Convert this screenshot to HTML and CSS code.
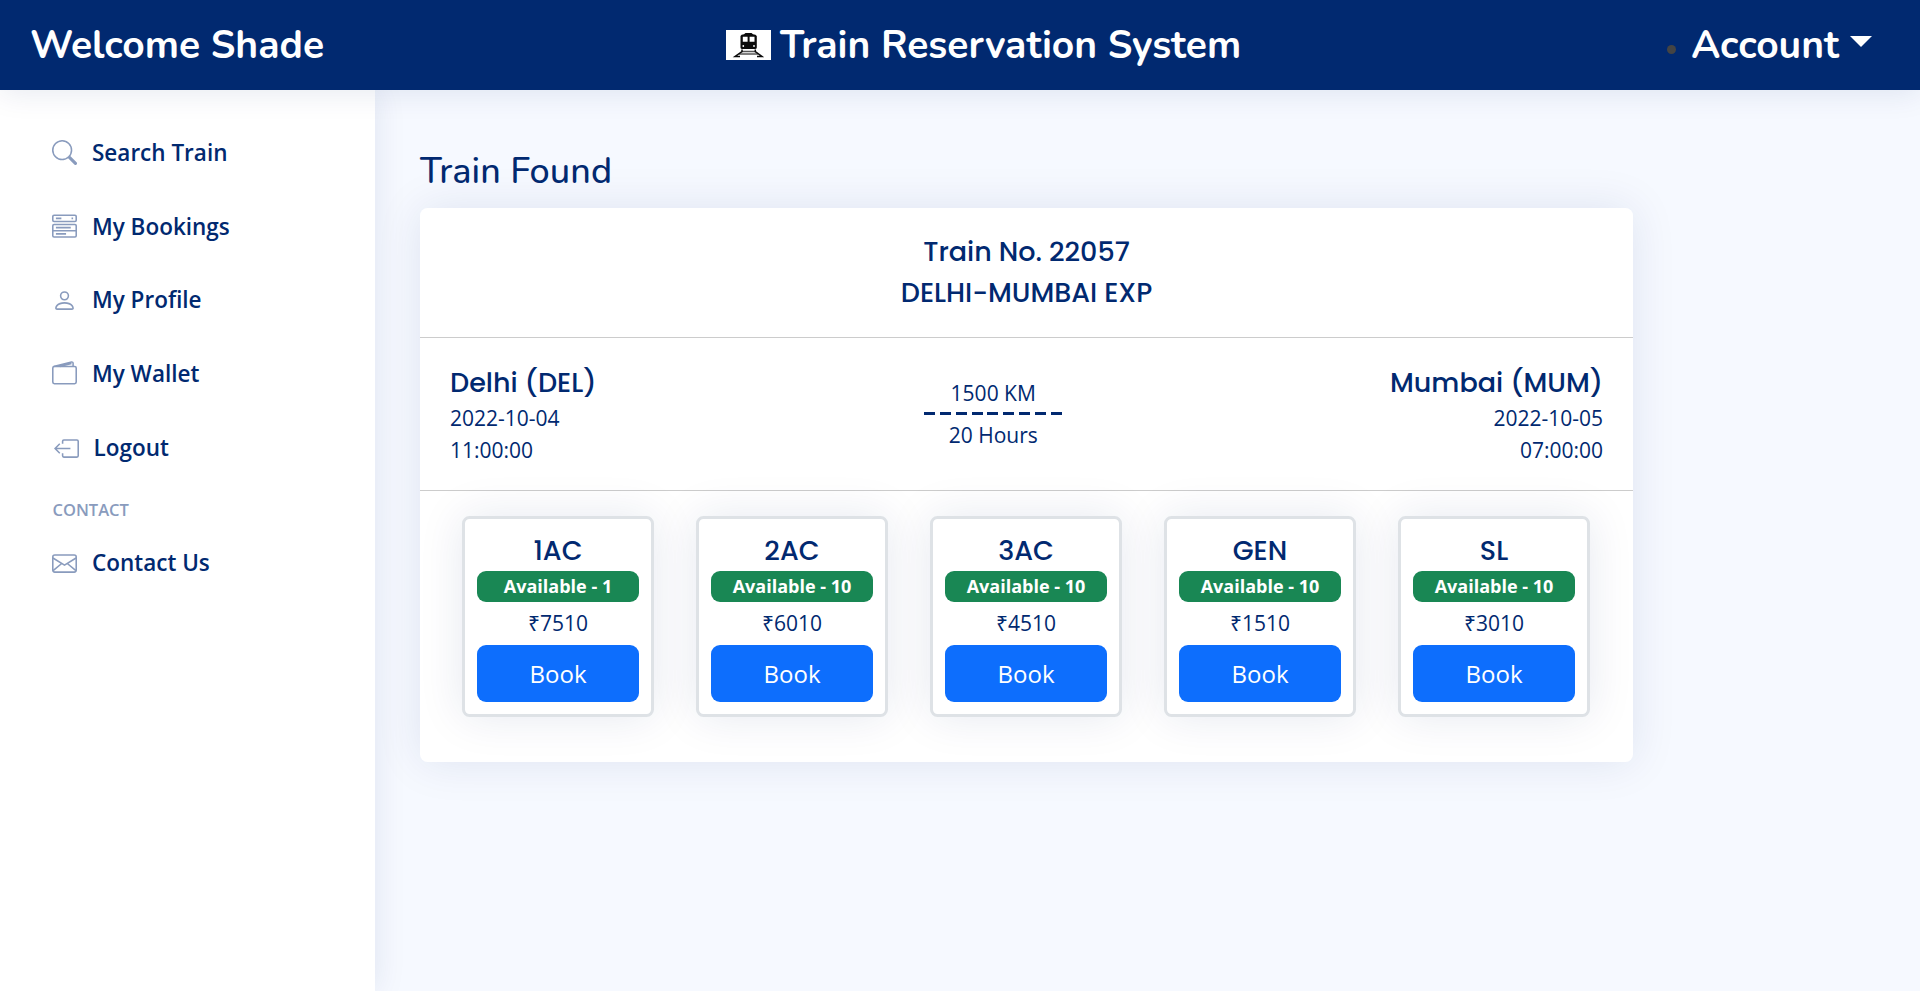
FILE: index.html
```html
<!DOCTYPE html>
<html lang="en">
<head>
<meta charset="utf-8">
<title>Train Reservation System</title>
<link rel="stylesheet" href="styles.css">
</head>
<body>
<header class="header">
  <h1 class="brand">Welcome Shade</h1>
  <h1 class="brand center"><svg class="logo" viewBox="0 0 45 30"><rect width="45" height="30" fill="#fff"/><path d="M14.500 6Q15 4.500 18 4.200L19.500 3H25.500L27 4.200Q30 4.500 30.800 6V17.500Q30.800 19 29 19H16.300Q14.500 19 14.500 17.500Z" fill="#0b0b0b"/><path d="M16.800 6.800H21.600V11.700H16.800ZM23.600 6.800H28.500V11.700H23.600Z" fill="#fff"/><circle cx="17.300" cy="16" r=".9" fill="#fff"/><circle cx="28" cy="16" r=".9" fill="#fff"/><path d="M16 21.500H29.500M13 24H32" stroke="#555" stroke-width="1.300"/><path d="M16 19.500V21.500L9 26.500H14M29.300 19.500V21.500L36 26.500H31" stroke="#0b0b0b" stroke-width="1.500" fill="none"/></svg><span>Train Reservation System</span></h1>
  <div class="account"><i class="bullet"></i><span class="brand">Account</span><i class="caret"></i></div>
</header>
<div class="page">
  <nav class="sidebar">
    <a class="link"><svg class="icon" viewBox="0 0 16 16"><path fill="currentColor" d="M11.742 10.344a6.500 6.500 0 1 0-1.397 1.398h-.001c.03.04.062.078.098.115l3.850 3.850a1 1 0 0 0 1.415-1.414l-3.850-3.850a1.007 1.007 0 0 0-.115-.1zM12 6.500a5.500 5.500 0 1 1-11 0 5.500 5.500 0 0 1 11 0z"/></svg><span>Search Train</span></a>
    <a class="link"><svg class="icon line" viewBox="0 0 16 16"><rect x=".5" y=".8" width="15" height="4" rx=".8"/><rect x=".5" y="6.700" width="15" height="8" rx=".8"/><path d="M.5 10.700h15M2.500 2.800h3.500M12.500 2.800h1M2.500 8.700h9.500M2.500 12.700h6.500"/></svg><span>My Bookings</span></a>
    <a class="link"><svg class="icon" viewBox="0 0 16 16"><path fill="currentColor" d="M8 8a3 3 0 1 0 0-6 3 3 0 0 0 0 6zm2-3a2 2 0 1 1-4 0 2 2 0 0 1 4 0zm4 8c0 1-1 1-1 1H3s-1 0-1-1 1-4 6-4 6 3 6 4zm-1-.004c-.001-.246-.154-.986-.832-1.664C11.516 10.680 10.289 10 8 10c-2.290 0-3.516.68-4.168 1.332-.678.678-.83 1.418-.832 1.664h10z"/></svg><span>My Profile</span></a>
    <a class="link"><svg class="icon line" viewBox="0 0 16 16"><rect x=".5" y="3.500" width="15" height="11" rx="1"/><path d="M1 3.500L12.500.600Q13.500.500 13.500 1.500V3.500M5 3.500L12.500 1.600"/></svg><span>My Wallet</span></a>
    <a class="link logout"><svg class="icon line" viewBox="0 0 16 16"><path d="M5.500 5V3.300Q5.500 2.500 6.300 2.500H14.700Q15.500 2.500 15.500 3.300V12.700Q15.500 13.500 14.700 13.500H6.300Q5.500 13.500 5.500 12.700V11M10.500 8H.8M3.700 5L.7 8L3.700 11"/></svg><span>Logout</span></a>
    <div class="heading">CONTACT</div>
    <a class="link"><svg class="icon line" viewBox="0 0 16 16"><rect x=".5" y="2.500" width="15" height="11" rx="1.300"/><path d="M.6 4.500L8 9L15.400 4.500M.7 12.600L6.200 8M15.300 12.600L9.800 8"/></svg><span>Contact Us</span></a>
  </nav>
  <main class="main">
    <h1 class="title">Train Found</h1>
    <section class="card">
      <div class="top"><h5 class="pop">Train No. 22057</h5><h5 class="pop">DELHI-MUMBAI EXP</h5></div>
      <div class="route">
        <div><h5 class="pop">Delhi (DEL)</h5><p>2022-10-04</p><p>11:00:00</p></div>
        <div class="mid"><p>1500 KM</p><div class="dash"></div><p>20 Hours</p></div>
        <div class="right"><h5 class="pop">Mumbai (MUM)</h5><p>2022-10-05</p><p>07:00:00</p></div>
      </div>
      <div class="classes">
        <div class="seat"><h5 class="pop">1AC</h5><span class="badge">Available - 1</span><p>₹7510</p><button class="book">Book</button></div>
        <div class="seat"><h5 class="pop">2AC</h5><span class="badge">Available - 10</span><p>₹6010</p><button class="book">Book</button></div>
        <div class="seat"><h5 class="pop">3AC</h5><span class="badge">Available - 10</span><p>₹4510</p><button class="book">Book</button></div>
        <div class="seat"><h5 class="pop">GEN</h5><span class="badge">Available - 10</span><p>₹1510</p><button class="book">Book</button></div>
        <div class="seat"><h5 class="pop">SL</h5><span class="badge">Available - 10</span><p>₹3010</p><button class="book">Book</button></div>
      </div>
    </section>
  </main>
</div>
</body>
</html>
```

FILE: styles.css
```css
* { box-sizing: border-box; }
body { margin: 0; height: 991px; overflow: hidden; background: #f6f9ff; color: #012970; font-family: "Open Sans", sans-serif; }
h1, h5, p { margin: 0; }

.header { height: 90px; padding: 0 48px 0 30px; display: grid; grid-template-columns: 696px auto 1fr; align-items: center; background: #012970; color: #fff; box-shadow: 0 3px 30px rgba(1, 41, 112, .1); position: relative; z-index: 2; }
.brand { font: 700 39px/60px Nunito, "Open Sans", sans-serif; white-space: nowrap; padding-top: 2px; }
.center { display: flex; align-items: center; gap: 9px; }
.logo { width: 45px; height: 30px; margin-top: -2px; }
.account { display: flex; align-items: center; justify-content: flex-end; }
.bullet { width: 9px; height: 9px; border-radius: 50%; background: #444; margin: 9px 15px 0 0; }
.caret { border: 11.5px solid transparent; border-top-color: #fff; border-bottom: 0; margin: -7px 0 0 11px; }

.page { display: flex; height: 901px; }
.sidebar { width: 375px; padding: 26px 52px; background: #fff; box-shadow: 0 0 30px rgba(1, 41, 112, .1); }
.link { display: flex; align-items: center; gap: 15px; height: 73.700px; font-size: 22.500px; font-weight: 600; }
.link span { margin-top: -1px; }
.logout { padding: 1px 0 0 1.500px; }
.icon { width: 25px; height: 25px; color: #899bbd; }
.line { fill: none; stroke: currentColor; stroke-width: 1; }
.heading { font-size: 16.500px; line-height: 22px; font-weight: 600; color: #899bbd; margin: 15px 0 5px 0.500px; }

.main { flex: 1; padding: 60px 45px; }
.title { font: 500 36px/44px Nunito, "Open Sans", sans-serif; letter-spacing: .1px; margin-bottom: 14px; }
.card { width: 1213px; height: 554px; background: #fff; border-radius: 7.500px; box-shadow: 0 0 45px rgba(1, 41, 112, .1); }
.pop { font: 500 27px/41px Poppins, Inter, sans-serif; }
.card p { font-size: 21px; font-weight: 400; line-height: 32px; }
.top { height: 130px; padding-top: 23px; text-align: center; border-bottom: 1px solid #ccc; }
.route { height: 153px; padding: 24px 30px; display: flex; justify-content: space-between; border-bottom: 1px solid #ccc; }
.route .pop { margin-bottom: -1px; }
.mid { text-align: center; padding-top: 15px; }
.dash { width: 139px; height: 3px; margin: 3px 0 4px; background: repeating-linear-gradient(90deg, #012970 0 11px, transparent 11px 15.850px); }
.right { text-align: right; }
.classes { display: grid; grid-template-columns: repeat(5, 192px); column-gap: 42px; padding: 25px 42px; }
.seat { height: 201px; padding: 12px; border: 3px solid #dee2e6; border-radius: 7.500px; background: #fff; text-align: center; box-shadow: 0 0 45px rgba(1, 41, 112, .1); display: flex; flex-direction: column; }
.seat .pop { line-height: 40px; }
.seat p { margin: 5px 0 6px; }
.badge { height: 31px; border-radius: 9px; background: #198754; color: #fff; font-size: 18px; font-weight: 700; line-height: 31px; }
.book { height: 57px; border: 0; border-radius: 9px; background: #0d6efd; color: #fff; font: 400 24px "Open Sans", sans-serif; }
```
